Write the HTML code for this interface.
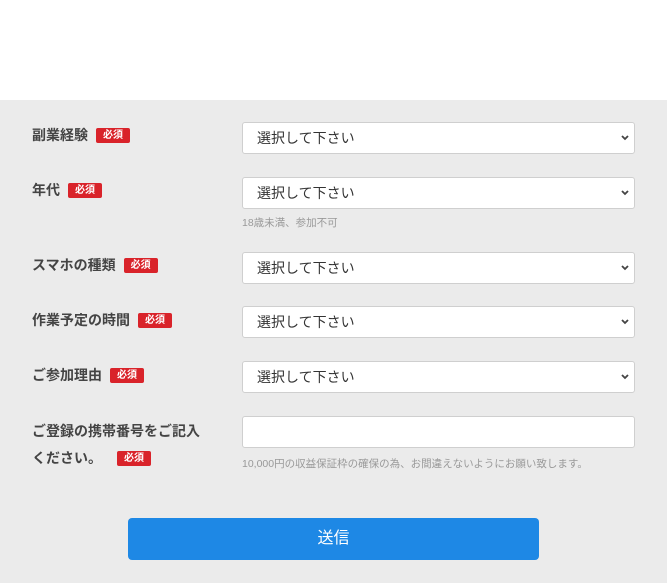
<!DOCTYPE html>
<html><head><meta charset="utf-8"><style>
*{margin:0;padding:0;box-sizing:border-box}
body{width:671px;height:583px;background:#fff;position:relative;overflow:hidden;font-family:"Liberation Sans","Noto Sans CJK JP",sans-serif}
.bg{position:absolute;left:0;top:100px;width:667px;height:483px;background:#ebebeb}
.lbl{position:absolute;left:32px;font-size:14px;font-weight:bold;color:#444;line-height:20px;white-space:nowrap}
.b{display:inline-block;background:#d9232a;color:#fff;font-size:10px;line-height:15px;padding:0 7px;border-radius:2px;vertical-align:2px;margin-left:8px;font-weight:bold}
.sel{position:absolute;left:242px;width:393px;height:32px;background:#fff;border:1px solid #cfcfcf;border-radius:3px;font-size:14px;color:#333;line-height:30px;padding-left:14px}
.sel svg{position:absolute;right:4px;top:11px}
.note{position:absolute;left:242px;font-size:10.5px;color:#999;white-space:nowrap}
.btn{position:absolute;left:128px;top:518px;width:411px;height:42px;background:#1e88e5;border-radius:4px;color:#fff;font-size:16px;text-align:center;line-height:42px}
</style></head><body>
<div class="bg"></div>
<div class="lbl" style="top:125px">副業経験<span class="b">必須</span></div>
<div class="sel" style="top:122px">選択して下さい<svg width="10" height="8" viewBox="0 0 10 8"><path d="M2 2l3 3 3-3" stroke="#444" stroke-width="1.8" fill="none"/></svg></div>
<div class="lbl" style="top:180px">年代<span class="b">必須</span></div>
<div class="sel" style="top:177px">選択して下さい<svg width="10" height="8" viewBox="0 0 10 8"><path d="M2 2l3 3 3-3" stroke="#444" stroke-width="1.8" fill="none"/></svg></div>
<div class="note" style="top:215px">18歳未満、参加不可</div>
<div class="lbl" style="top:255px">スマホの種類<span class="b">必須</span></div>
<div class="sel" style="top:252px">選択して下さい<svg width="10" height="8" viewBox="0 0 10 8"><path d="M2 2l3 3 3-3" stroke="#444" stroke-width="1.8" fill="none"/></svg></div>
<div class="lbl" style="top:310px">作業予定の時間<span class="b">必須</span></div>
<div class="sel" style="top:306px">選択して下さい<svg width="10" height="8" viewBox="0 0 10 8"><path d="M2 2l3 3 3-3" stroke="#444" stroke-width="1.8" fill="none"/></svg></div>
<div class="lbl" style="top:365px">ご参加理由<span class="b">必須</span></div>
<div class="sel" style="top:361px">選択して下さい<svg width="10" height="8" viewBox="0 0 10 8"><path d="M2 2l3 3 3-3" stroke="#444" stroke-width="1.8" fill="none"/></svg></div>
<div class="lbl" style="top:418px;line-height:27px">ご登録の携帯番号をご記入<br>ください。　<span class="b">必須</span></div>
<div class="sel" style="top:416px"></div>
<div class="note" style="top:456px">10,000円の収益保証枠の確保の為、お間違えないようにお願い致します。</div>
<div class="btn">送信</div>
</body></html>
